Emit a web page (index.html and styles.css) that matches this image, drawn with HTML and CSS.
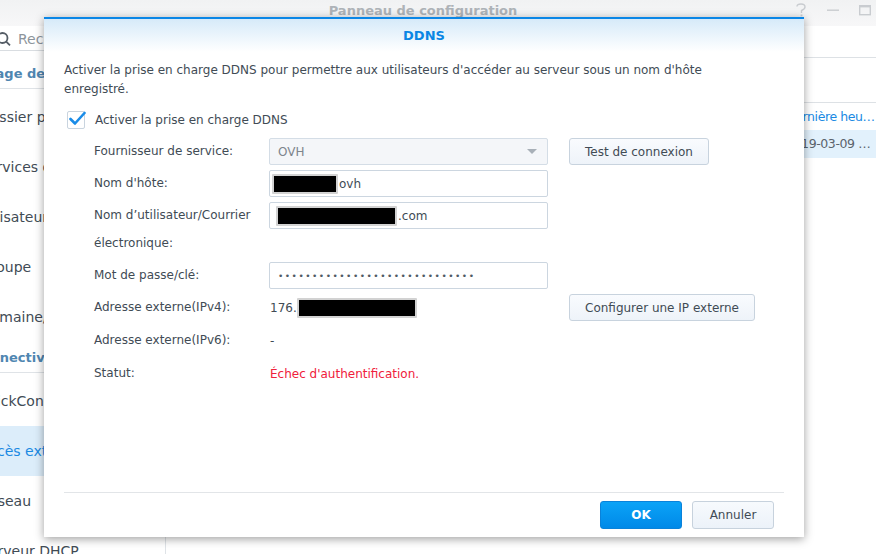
FILE: index.html
```html
<!DOCTYPE html>
<html lang="fr">
<head>
<meta charset="utf-8">
<title>DDNS</title>
<link rel="stylesheet" href="styles.css">
</head>
<body>
<div class="win">
  <div class="titlebar">
    <span class="title">Panneau de configuration</span>
    <div class="win-ctrl">
      <svg class="ctl" width="14" height="14" viewBox="0 0 14 14"><path d="M3 3.5 Q3 1 7 1 Q11 1 11 4 Q11 6 7.5 7.5 L7.5 10" fill="none" stroke="#c9ccd0" stroke-width="1.4"/><rect x="6.6" y="11.5" width="1.8" height="1.8" fill="#c9ccd0"/></svg>
      <svg class="ctl" width="14" height="14" viewBox="0 0 14 14"><rect x="1" y="6.5" width="12" height="1.4" fill="#c9ccd0"/></svg>
      <svg class="ctl" width="14" height="14" viewBox="0 0 14 14"><rect x="1.7" y="2.7" width="10.6" height="9" fill="none" stroke="#c9ccd0" stroke-width="1.4"/><rect x="1" y="2" width="12" height="2.4" fill="#c9ccd0"/></svg>
    </div>
  </div>
  <div class="win-body">
    <aside class="sidebar">
      <div class="search">
        <svg width="16" height="16" viewBox="0 0 16 16"><circle cx="6.5" cy="7" r="5" fill="none" stroke="#555d66" stroke-width="1.8"/><path d="M10.2 10.6 L14 14.4" stroke="#555d66" stroke-width="1.8"/></svg>
        <span class="search-ph">Rechercher</span>
      </div>
      <div class="sec s1">Partage de fichiers</div>
      <div class="item">Dossier partagé</div>
      <div class="item i-serv">Services de fichiers</div>
      <div class="item i-util">Utilisateur</div>
      <div class="item">Groupe</div>
      <div class="item">Domaine/LDAP</div>
      <div class="sec s2">Connectivité</div>
      <div class="item i-qc">QuickConnect</div>
      <div class="item sel">Accès externe</div>
      <div class="item">Réseau</div>
      <div class="item">Serveur DHCP</div>
    </aside>
    <main class="main">
      <div class="toolbar"></div>
      <div class="tabs"></div>
      <div class="thead"><span class="cell">Dernière heure de mise à jour</span></div>
      <div class="trow"><span class="cell">2019-03-09 14:32</span></div>
    </main>
  </div>
</div>

<div class="dialog">
  <div class="dlg-head">DDNS</div>
  <div class="dlg-body">
    <p class="desc">Activer la prise en charge DDNS pour permettre aux utilisateurs d'accéder au serveur sous un nom d'hôte enregistré.</p>
    <label class="check-row">
      <span class="cbox"><svg width="18" height="18" viewBox="0 0 18 18"><path d="M2.5 9 L7 13.5 L16.5 3" fill="none" stroke="#1a8ce8" stroke-width="2.6" stroke-linecap="round" stroke-linejoin="round"/></svg></span>
      <span>Activer la prise en charge DDNS</span>
    </label>
    <div class="form">
      <div class="row">
        <span class="lbl">Fournisseur de service:</span>
        <div class="field select"><span>OVH</span><span class="arrow"></span></div>
        <button class="btn">Test de connexion</button>
      </div>
      <div class="row">
        <span class="lbl">Nom d'hôte:</span>
        <div class="field input"><span class="redact r1"></span><span>ovh</span></div>
      </div>
      <div class="row">
        <span class="lbl wrap">Nom d’utilisateur/Courrier électronique:</span>
        <div class="field input in2"><span class="redact r2"></span><span>.com</span></div>
      </div>
      <div class="row">
        <span class="lbl">Mot de passe/clé:</span>
        <div class="field input"><span class="dots">•••••••••••••••••••••••••••••</span></div>
      </div>
      <div class="row">
        <span class="lbl">Adresse externe(IPv4):</span>
        <div class="field plain"><span>176.</span><span class="redact r3"></span></div>
        <button class="btn">Configurer une IP externe</button>
      </div>
      <div class="row txt">
        <span class="lbl">Adresse externe(IPv6):</span>
        <div class="field plain"><span>-</span></div>
      </div>
      <div class="row txt">
        <span class="lbl">Statut:</span>
        <div class="field plain err"><span>Échec d'authentification.</span></div>
      </div>
    </div>
  </div>
  <div class="dlg-foot">
    <button class="fbtn ok">OK</button>
    <button class="fbtn cancel">Annuler</button>
  </div>
</div>
</body>
</html>
```

FILE: styles.css
```css
html, body {
  margin: 0;
  padding: 0;
}
body {
  width: 876px;
  height: 554px;
  overflow: hidden;
  position: relative;
  background: #fff;
  font-family: "DejaVu Sans", Verdana, sans-serif;
  color: #414b55;
}
.win {
  width: 876px;
  height: 554px;
  display: flex;
  flex-direction: column;
}
.titlebar {
  height: 26px;
  flex: none;
  background: linear-gradient(#f1f2f3, #f7f7f8);
  position: relative;
  display: flex;
  align-items: flex-start;
  justify-content: center;
}
.title {
  font-weight: bold;
  font-size: 13px;
  color: #aeb3b8;
  margin-top: 3px;
  margin-left: -30px;
}
.win-ctrl {
  position: absolute;
  right: 4px;
  top: 3px;
  display: flex;
  gap: 18px;
}
.win-body {
  flex: 1;
  display: flex;
  min-height: 0;
}
.sidebar {
  width: 166px;
  flex: none;
  border-right: 1px solid #dfe3e7;
  box-sizing: border-box;
  overflow: hidden;
  font-size: 14px;
  color: #414b55;
}
.search {
  height: 23px;
  border-bottom: 1px solid #d9dde1;
  display: flex;
  align-items: center;
  gap: 6px;
  margin-left: -4px;
  margin-bottom: 7px;
  padding-top: 1px;
}
.search-ph {
  color: #8d949b;
  font-size: 14px;
}
.sec {
  height: 30px;
  line-height: 32px;
  border-bottom: 1px solid #dfe3e7;
  margin-bottom: 3px;
  font-weight: bold;
  color: #4f86b1;
  font-size: 13px;
  white-space: nowrap;
}
.sec.s1 {
  text-indent: -35px;
}
.sec.s2 {
  text-indent: -28px;
}
.item {
  height: 50px;
  line-height: 50px;
  white-space: nowrap;
  text-indent: -20px;
}
.item.i-serv {
  text-indent: -21px;
}
.item.i-util {
  text-indent: -24px;
}
.item.i-qc {
  text-indent: -23px;
}
.item.sel {
  background: #dcedfa;
  color: #1a89e3;
}
.main {
  flex: 1;
  display: flex;
  flex-direction: column;
}
.toolbar {
  height: 31px;
  border-bottom: 1px solid #dde1e5;
}
.tabs {
  height: 44px;
  border-bottom: 1px solid #dde1e5;
}
.thead, .trow {
  height: 27px;
  display: flex;
  justify-content: flex-end;
  font-size: 12.5px;
  line-height: 27px;
  letter-spacing: -0.4px;
}
.trow {
  height: 28px;
  background: #e2f1fc;
  color: #5a636c;
}
.thead {
  color: #1a89e3;
}
.cell {
  width: 90px;
  overflow: hidden;
  white-space: nowrap;
  text-overflow: ellipsis;
}

/* dialog */
.dialog {
  position: absolute;
  left: 44px;
  top: 17px;
  width: 760px;
  height: 520px;
  box-sizing: border-box;
  background: #fff;
  border-top: 2px solid #0a86e6;
  box-shadow: 0 2px 9px rgba(0, 0, 0, 0.38);
  display: flex;
  flex-direction: column;
  font-size: 12px;
}
.dlg-head {
  height: 33px;
  flex: none;
  background: linear-gradient(#d6eaf9, #ffffff);
  text-align: center;
  line-height: 33px;
  font-weight: bold;
  font-size: 13px;
  color: #0a86e4;
}
.dlg-body {
  flex: 1;
  padding: 9px 20px 0;
}
.desc {
  margin: 0;
  line-height: 19px;
  max-width: 665px;
}
.check-row {
  display: flex;
  align-items: center;
  height: 18px;
  margin-top: 12px;
  padding-left: 3px;
  gap: 10px;
}
.cbox {
  width: 16px;
  height: 16px;
  border: 1px solid #c9d4df;
  border-radius: 2px;
  position: relative;
  flex: none;
}
.cbox svg {
  position: absolute;
  left: 0;
  top: -2px;
}
.form {
  margin-top: 9px;
  margin-left: 30px;
  display: flex;
  flex-direction: column;
  gap: 5px;
}
.row {
  display: flex;
  align-items: flex-start;
}
.row.txt {
  margin-top: 1px;
}
.lbl {
  width: 175px;
  flex: none;
  line-height: 27px;
}
.lbl.wrap {
  width: 170px;
  line-height: 27.5px;
}
.row .lbl.wrap + .field {
  margin-left: 5px;
}
.field {
  width: 279px;
  height: 27px;
  box-sizing: border-box;
  display: flex;
  align-items: center;
  flex: none;
}
.select {
  background: #f4f6f9;
  border: 1px solid #d4dde6;
  border-radius: 2px;
  padding: 0 8px;
  color: #7d858c;
  justify-content: space-between;
}
.arrow {
  width: 0;
  height: 0;
  border-left: 5px solid transparent;
  border-right: 5px solid transparent;
  border-top: 5px solid #a8b0b8;
  margin-right: 2px;
}
.input {
  border: 1px solid #ccd6e0;
  border-radius: 2px;
  padding-left: 2px;
  color: #414b55;
}
.in2 {
  padding-left: 6px;
}
.redact {
  display: inline-block;
  height: 16px;
  background: #000;
  border: 2px solid #d2d2d2;
  border-radius: 1px;
  margin-right: 1px;
}
.r1 { width: 62px; }
.r2 { width: 117px; }
.r3 { width: 116px; }
.dots {
  padding-left: 6px;
  font-size: 9px;
  letter-spacing: 1.5px;
  color: #505a64;
}
.plain {
  padding-left: 1px;
}
.err {
  color: #f0203b;
}
.btn {
  margin-left: 21px;
  height: 27px;
  padding: 0 15px;
  font-family: inherit;
  font-size: 12px;
  color: #414b55;
  background: linear-gradient(#f9fbfe, #eef3f9);
  border: 1px solid #c8d3de;
  border-radius: 3px;
}
.dlg-foot {
  flex: none;
  margin: 0 20px;
  border-top: 1px solid #e2e5e8;
  height: 44px;
  display: flex;
  justify-content: flex-end;
  align-items: center;
  gap: 10px;
  padding-right: 10px;
}
.fbtn {
  width: 82px;
  height: 28px;
  border-radius: 3px;
  font-family: inherit;
  font-size: 12px;
}
.ok {
  background: linear-gradient(#0ba3f7, #0089e8);
  border: 1px solid #0a82da;
  color: #fff;
  font-weight: bold;
}
.cancel {
  background: linear-gradient(#f7fafd, #ecf2f9);
  border: 1px solid #c7d2dd;
  color: #414b55;
}
```
